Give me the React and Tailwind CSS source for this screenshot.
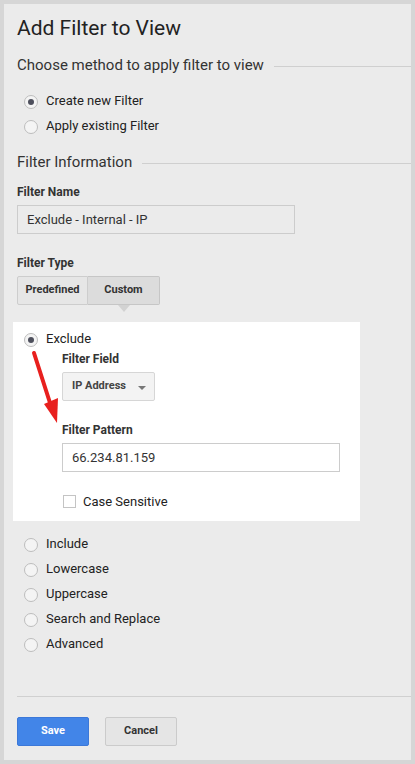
import React from 'react';

const Radio = ({ checked, label }) => (
    <label className="flex items-center h-[25px] gap-[8px]">
        <span className="w-[14px] h-[14px] mt-[2px] rounded-full border border-[#bdbdbd] bg-[#f4f4f4] flex items-center justify-center shrink-0">
            {checked && <span className="w-[6px] h-[6px] rounded-full bg-[#4d4f5c]" />}
        </span>
        <span className="text-[13px] leading-[16px] text-[#222]">{label}</span>
    </label>
);

const SectionTitle = ({ children }) => (
    <div className="flex items-center gap-[10px] h-[20px]">
        <span className="text-[15px] leading-[20px] text-[#333] whitespace-nowrap">{children}</span>
        <div className="flex-1 h-px bg-[#cfcfcf] mt-[3px]" />
    </div>
);

const Label = ({ children, className = '' }) => (
    <div className={`text-[12px] leading-[16px] font-bold text-[#333] ${className}`}>{children}</div>
);

const App = () => {
    return (
        <div className="w-[415px] h-[764px] bg-[#d6d6d6] p-[4px] font-['Roboto',sans-serif]">
            <div className="h-full bg-[#ebebeb] pl-[9px] pt-[11px] overflow-hidden">
                <h1 className="text-[21px] text-[#222] ml-[4px] leading-[26px]">Add Filter to View</h1>

                <div className="mt-[14px] ml-[4px]">
                    <SectionTitle>Choose method to apply filter to view</SectionTitle>
                </div>
                <div className="mt-[13px] ml-[11px]">
                    <Radio checked label="Create new Filter" />
                    <Radio label="Apply existing Filter" />
                </div>

                <div className="mt-[14px] ml-[4px]">
                    <SectionTitle>Filter Information</SectionTitle>
                </div>

                <Label className="mt-[12px] ml-[4px]">Filter Name</Label>
                <div className="mt-[5px] ml-[4px] w-[278px] h-[29px] border border-[#cccccc] flex items-center px-[9px] text-[13px] text-[#333]">
                    Exclude - Internal - IP
                </div>

                <Label className="mt-[21px] ml-[4px]">Filter Type</Label>
                <div className="mt-[5px] ml-[4px] flex">
                    <div className="w-[71px] h-[29px] border border-[#cdcdcd] rounded-l-[2px] bg-[#e6e6e6] flex items-center justify-center text-[11px] font-bold text-[#333]">
                        Predefined
                    </div>
                    <div className="relative w-[72px] h-[29px] border border-l-0 border-[#c6c6c6] rounded-r-[2px] bg-[#dcdcdc] flex items-center justify-center text-[11px] font-bold text-[#333]">
                        Custom
                        <span className="absolute left-1/2 -translate-x-1/2 top-[28px] w-0 h-0 border-l-[6px] border-r-[6px] border-t-[7px] border-l-transparent border-r-transparent border-t-[#d2d2d2]" />
                    </div>
                </div>

                <div className="relative mt-[17px] w-[347px] bg-white pt-[4px] pb-[13px]">
                    <div className="ml-[11px]">
                        <Radio checked label="Exclude" />
                    </div>
                    <div className="ml-[49px]">
                        <Label>Filter Field</Label>
                        <div className="mt-[5px] w-[93px] h-[29px] border border-[#d6d6d6] rounded-[2px] bg-[#f3f3f3] flex items-center justify-between pl-[9px] pr-[8px] text-[11px] font-bold text-[#444]">
                            IP Address
                            <span className="w-0 h-0 border-l-[4px] border-r-[4px] border-t-[4px] border-l-transparent border-r-transparent border-t-[#777] mt-[2px]" />
                        </div>
                        <Label className="mt-[21px]">Filter Pattern</Label>
                        <div className="mt-[5px] w-[278px] h-[29px] border border-[#cccccc] flex items-center px-[9px] text-[13px] text-[#333]">
                            66.234.81.159
                        </div>
                        <div className="mt-[23px] h-[13px] flex items-center gap-[7px]">
                            <span className="w-[13px] h-[13px] border border-[#c4c4c4] bg-white ml-[1px]" />
                            <span className="text-[13px] leading-[16px] text-[#222]">Case Sensitive</span>
                        </div>
                    </div>
                    {/* red annotation arrow */}
                    <svg className="absolute left-0 top-0 pointer-events-none" width="70" height="110" viewBox="0 0 70 110">
                        <line x1="21" y1="31" x2="38" y2="84" stroke="#e8201e" strokeWidth="4" strokeLinecap="round" />
                        <polygon points="31,82 45,76 44,101" fill="#e8201e" />
                    </svg>
                </div>

                <div className="mt-[10px] ml-[11px]">
                    <Radio label="Include" />
                    <Radio label="Lowercase" />
                    <Radio label="Uppercase" />
                    <Radio label="Search and Replace" />
                    <Radio label="Advanced" />
                </div>

                <div className="mt-[40px] ml-[4px] h-px bg-[#d0d0d0]" />

                <div className="mt-[20px] ml-[4px] flex gap-[16px]">
                    <button className="w-[72px] h-[29px] rounded-[2px] bg-[#4285e8] border border-[#3c78d8] text-white text-[11px] font-bold">
                        Save
                    </button>
                    <button className="w-[72px] h-[29px] rounded-[2px] bg-[#e5e5e5] border border-[#cbcbcb] text-[#333] text-[11px] font-bold">
                        Cancel
                    </button>
                </div>
            </div>
        </div>
    );
};

export default App;
